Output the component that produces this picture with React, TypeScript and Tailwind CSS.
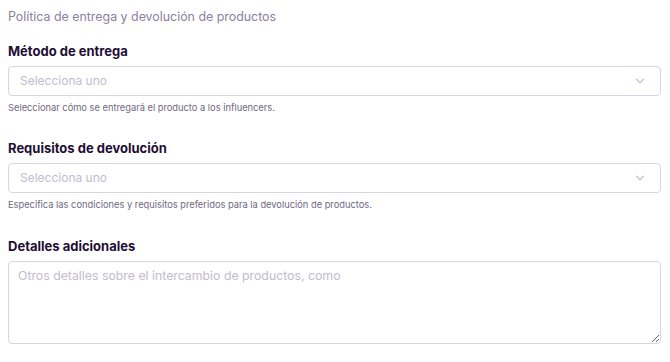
import { ChevronDown } from "lucide-react";

const selects = [
  {
    label: "Método de entrega",
    help: "Seleccionar cómo se entregará el producto a los influencers.",
  },
  {
    label: "Requisitos de devolución",
    help: "Especifica las condiciones y requisitos preferidos para la devolución de productos.",
  },
];

export default function App() {
  return (
    <div className="min-h-screen bg-white pl-2 pr-[9px] pt-[9px] font-['Inter',sans-serif]">
      <p className="text-[12.4px] leading-[16px] text-[#8a80a0]">
        Política de entrega y devolución de productos
      </p>

      {selects.map((s, i) => (
        <div key={s.label} className={i === 0 ? "mt-[17px]" : "mt-[25px]"}>
          <h3 className="text-[13px] font-bold leading-[18px] text-[#1f0f35]">
            {s.label}
          </h3>
          <button className="mt-[6px] flex h-[30px] w-full items-center justify-between rounded-[4px] border border-[#d9d5e0] bg-white pl-[11px] pr-[13px] text-left">
            <span className="text-[12px] text-[#c2bccd]">Selecciona uno</span>
            <ChevronDown className="size-[14px] text-[#c7c2cf]" strokeWidth={2.2} />
          </button>
          <p className="mt-[6px] text-[9.3px] leading-[12px] text-[#6f6880]">
            {s.help}
          </p>
        </div>
      ))}

      <div className="mt-[26px]">
        <h3 className="text-[13px] font-bold leading-[18px] text-[#1f0f35]">
          Detalles adicionales
        </h3>
        <textarea
          className="mt-[6px] block h-[83px] w-full resize-y rounded-[4px] border border-[#d9d5e0] px-[9px] py-[6px] text-[12.3px] leading-[16px] outline-none placeholder:text-[#c2bccd]"
          placeholder="Otros detalles sobre el intercambio de productos, como"
        />
      </div>
    </div>
  );
}
